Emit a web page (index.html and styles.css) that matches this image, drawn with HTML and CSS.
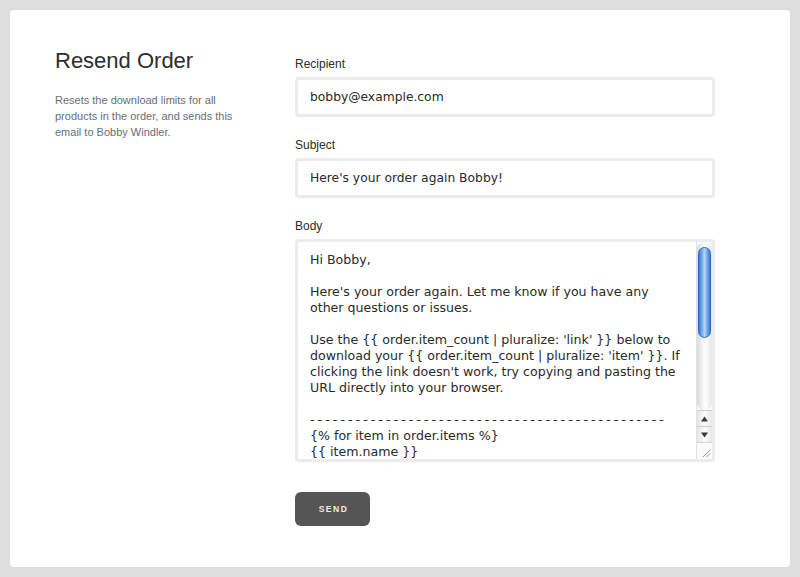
FILE: index.html
```html
<!DOCTYPE html>
<html lang="en">
<head>
<meta charset="utf-8">
<title>Resend Order</title>
<link rel="stylesheet" href="styles.css">
</head>
<body>
<div class="card">
  <aside class="intro">
    <h1 class="title">Resend Order</h1>
    <p class="desc">Resets the download limits for all products in the order, and sends this email to Bobby Windler.</p>
  </aside>
  <form class="form">
    <div class="field">
      <label class="label" for="recipient">Recipient</label>
      <input class="input" id="recipient" type="text" value="bobby@example.com">
    </div>
    <div class="field">
      <label class="label" for="subject">Subject</label>
      <input class="input" id="subject" type="text" value="Here's your order again Bobby!">
    </div>
    <div class="field">
      <label class="label">Body</label>
      <div class="area">
        <div class="area-text" role="textbox" aria-multiline="true">Hi Bobby,

Here's your order again. Let me know if you have any
other questions or issues.

Use the {{ order.item_count | pluralize: 'link' }} below to
download your {{ order.item_count | pluralize: 'item' }}. If
clicking the link doesn't work, try copying and pasting the
URL directly into your browser.

<span class="dashes">-----------------------------------------------</span>
{% for item in order.items %}
{{ item.name }}</div>
        <div class="scrollbar">
          <div class="track"><div class="thumb"></div></div>
          <div class="arrow up"><svg width="7" height="6" viewBox="0 0 7 6"><path d="M3.5 0.5 L7 5.5 L0 5.5 Z" fill="#3a3a3a"/></svg></div>
          <div class="arrow down"><svg width="7" height="6" viewBox="0 0 7 6"><path d="M0 0.5 L7 0.5 L3.5 5.5 Z" fill="#3a3a3a"/></svg></div>
          <div class="grip"><svg width="9" height="9" viewBox="0 0 9 9"><path d="M1 8 L8 1 M4.5 8 L8 4.5" stroke="#9a9a9a" stroke-width="1"/></svg></div>
        </div>
      </div>
    </div>
    <div class="actions">
      <button class="btn" type="button">SEND</button>
    </div>
  </form>
</div>
</body>
</html>
```

FILE: styles.css
```css
html, body {
  margin: 0;
  padding: 0;
}
body {
  background: #dddddd;
  padding: 10px;
  font-family: "Liberation Sans", Arial, sans-serif;
  color: #333;
}
.card {
  background: #fff;
  border-radius: 4px;
  height: 557px;
  box-sizing: border-box;
  padding: 38px 75px 0 45px;
  display: grid;
  grid-template-columns: 190px 420px;
  column-gap: 50px;
  align-items: start;
}
.title {
  margin: 0;
  font-size: 22px;
  line-height: 26px;
  font-weight: normal;
  color: #2d2d2d;
}
.desc {
  margin: 18px 0 0;
  font-size: 11px;
  line-height: 16px;
  color: #6a6e75;
}
.form {
  margin: 0;
  padding-top: 8px;
}
.field {
  margin-bottom: 20px;
}
.label {
  display: block;
  font-size: 12px;
  line-height: 16px;
  color: #2d2d2d;
  margin-bottom: 5px;
}
.input {
  display: block;
  box-sizing: border-box;
  width: 420px;
  height: 40px;
  margin: 0;
  border: 3px solid #ececec;
  border-radius: 4px;
  padding: 0 12px;
  font-family: "DejaVu Sans", Verdana, sans-serif;
  font-size: 12.3px;
  color: #2a2a2a;
  background: #fff;
  outline: none;
}
.area {
  position: relative;
  box-sizing: border-box;
  width: 420px;
  height: 223px;
  border: 3px solid #ececec;
  border-radius: 4px;
  background: #fff;
  overflow: hidden;
}
.area-text {
  box-sizing: border-box;
  height: 217px;
  padding: 10px 18px 0 12px;
  overflow: hidden;
  white-space: pre;
  font-family: "DejaVu Sans", Verdana, sans-serif;
  font-size: 12.6px;
  line-height: 16px;
  color: #2a2a2a;
}
.dashes {
  letter-spacing: 3.05px;
}
.scrollbar {
  position: absolute;
  top: 0;
  right: 0;
  bottom: 0;
  width: 15px;
  display: flex;
  flex-direction: column;
  background: #fafafa;
  border-left: 1px solid #e2e2e2;
}
.track {
  position: relative;
  flex: 1;
  border-radius: 7px;
  background: linear-gradient(to right, #d9d9d9, #f3f3f3 35%, #ffffff 55%, #e6e6e6);
}
.thumb {
  position: absolute;
  top: 5px;
  left: 1px;
  right: 1px;
  height: 89px;
  border: 1px solid #2f6bc4;
  border-radius: 7px;
  background: linear-gradient(to right, #3579d6, #7fb1ee 30%, #b3d3f8 50%, #7fb1ee 70%, #3579d6);
}
.arrow {
  height: 15px;
  display: flex;
  align-items: center;
  justify-content: center;
  background: linear-gradient(to right, #e4e4e4, #fbfbfb 50%, #e8e8e8);
  border-top: 1px solid #cfcfcf;
}
.grip {
  height: 15px;
  display: flex;
  align-items: flex-end;
  justify-content: flex-end;
  background: #fbfbfb;
  border-top: 1px solid #d6d6d6;
  padding: 0 1px 1px 0;
}
.grip svg {
  display: block;
}
.actions {
  padding-top: 10px;
}
.btn {
  display: block;
  width: 75px;
  height: 34px;
  border: 0;
  border-radius: 6px;
  background: #555555;
  color: #eeeeee;
  font-family: "Liberation Sans", Arial, sans-serif;
  font-weight: bold;
  font-size: 8.5px;
  letter-spacing: 1.5px;
  padding: 0 0 0 2px;
  cursor: pointer;
}
```
